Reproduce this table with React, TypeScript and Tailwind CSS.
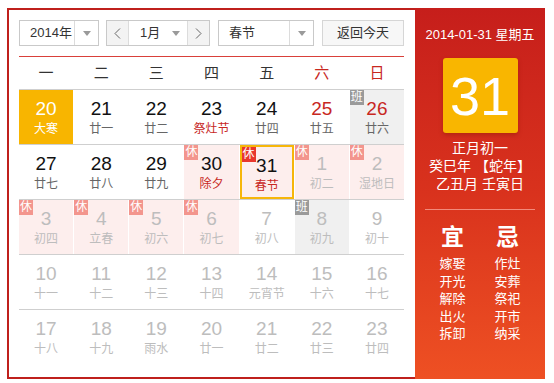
import React from 'react';

type Day = {
  d: number;
  lunar: string;
  other?: boolean;
  weekend?: boolean;
  fest?: boolean;
  tag?: '休' | '班';
  today?: boolean;
  selected?: boolean;
};

const rows: Day[][] = [
  [
    { d: 20, lunar: '大寒', today: true },
    { d: 21, lunar: '廿一' },
    { d: 22, lunar: '廿二' },
    { d: 23, lunar: '祭灶节', fest: true },
    { d: 24, lunar: '廿四' },
    { d: 25, lunar: '廿五', weekend: true },
    { d: 26, lunar: '廿六', weekend: true, tag: '班' },
  ],
  [
    { d: 27, lunar: '廿七' },
    { d: 28, lunar: '廿八' },
    { d: 29, lunar: '廿九' },
    { d: 30, lunar: '除夕', fest: true, tag: '休' },
    { d: 31, lunar: '春节', fest: true, tag: '休', selected: true },
    { d: 1, lunar: '初二', other: true, tag: '休' },
    { d: 2, lunar: '湿地日', other: true, tag: '休' },
  ],
  [
    { d: 3, lunar: '初四', other: true, tag: '休' },
    { d: 4, lunar: '立春', other: true, tag: '休' },
    { d: 5, lunar: '初六', other: true, tag: '休' },
    { d: 6, lunar: '初七', other: true, tag: '休' },
    { d: 7, lunar: '初八', other: true },
    { d: 8, lunar: '初九', other: true, tag: '班' },
    { d: 9, lunar: '初十', other: true },
  ],
  [
    { d: 10, lunar: '十一', other: true },
    { d: 11, lunar: '十二', other: true },
    { d: 12, lunar: '十三', other: true },
    { d: 13, lunar: '十四', other: true },
    { d: 14, lunar: '元宵节', other: true },
    { d: 15, lunar: '十六', other: true },
    { d: 16, lunar: '十七', other: true },
  ],
  [
    { d: 17, lunar: '十八', other: true },
    { d: 18, lunar: '十九', other: true },
    { d: 19, lunar: '雨水', other: true },
    { d: 20, lunar: '廿一', other: true },
    { d: 21, lunar: '廿二', other: true },
    { d: 22, lunar: '廿三', other: true },
    { d: 23, lunar: '廿四', other: true },
  ],
];

const weekdays = ['一', '二', '三', '四', '五', '六', '日'];
const yi = ['嫁娶', '开光', '解除', '出火', '拆卸'];
const ji = ['作灶', '安葬', '祭祀', '开市', '纳采'];

const Caret = () => (
  <svg width="8" height="5" viewBox="0 0 8 5">
    <path d="M0 0 L8 0 L4 5 Z" fill="#9a9a9a" />
  </svg>
);

const Chevron = ({ dir }: { dir: 'l' | 'r' }) => (
  <svg width="7" height="11" viewBox="0 0 7 11">
    <path
      d={dir === 'l' ? 'M6 0.5 L1 5.5 L6 10.5' : 'M1 0.5 L6 5.5 L1 10.5'}
      fill="none"
      stroke="#666"
      strokeWidth="1"
    />
  </svg>
);

const Cell = ({ day }: { day: Day }) => {
  let bg = 'bg-white';
  if (day.today) bg = 'bg-[#f8b500]';
  else if (day.tag === '休') bg = 'bg-[#fdeeed]';
  else if (day.tag === '班') bg = 'bg-[#f0f0f0]';

  let num = 'text-[#111]';
  let lun = 'text-[#666]';
  if (day.today) {
    num = 'text-white';
    lun = 'text-white';
  } else if (day.other) {
    num = 'text-[#bdbdbd]';
    lun = 'text-[#bdbdbd]';
  } else {
    if (day.weekend) num = 'text-[#c8281f]';
    if (day.fest) lun = 'text-[#c8281f]';
  }

  let tagBg = 'bg-[#f3958d]';
  if (day.tag === '班') tagBg = 'bg-[#9a9a9a]';
  if (day.selected) tagBg = 'bg-[#e8372d]';

  return (
    <div
      className={`relative h-[54px] flex flex-col items-center pt-[9px] ${bg} ${
        day.selected ? 'border-2 border-[#f6b60a] pt-[7px]' : ''
      }`}
    >
      {day.tag && (
        <span
          className={`absolute top-0 left-0 w-[14px] h-[15px] text-[12px] leading-[15px] text-white text-center ${tagBg}`}
        >
          {day.tag}
        </span>
      )}
      <span className={`text-[19px] leading-[20px] ${num}`}>{day.d}</span>
      <span className={`mt-[2px] text-[12px] leading-[16px] ${lun}`}>{day.lunar}</span>
    </div>
  );
};

export default function App() {
  return (
    <div
      className="w-[554px] h-[383px] bg-white pt-[8px] pl-[7px]"
      style={{ fontFamily: '"Liberation Sans", "Noto Sans CJK SC", sans-serif' }}
    >
      <div className="flex w-[538px] h-[371px]">
        <div className="w-[408px] border-2 border-r-0 border-[#bf201c] pl-[10px] pr-[11px] pt-[10px]">
          {/* toolbar */}
          <div className="flex h-[26px] text-[13px] text-[#333]">
            <div className="w-[80px] flex border border-[#c9c9c9] bg-white">
              <div className="flex-1 flex items-center pl-[10px]">2014年</div>
              <div className="w-[24px] border-l border-[#dcdcdc] flex items-center justify-center">
                <Caret />
              </div>
            </div>
            <div className="ml-[7px] w-[104px] flex border border-[#c9c9c9] bg-white">
              <div className="w-[22px] bg-[#f3f3f3] border-r border-[#dcdcdc] flex items-center justify-center">
                <Chevron dir="l" />
              </div>
              <div className="flex-1 flex items-center pl-[11px]">1月</div>
              <div className="w-[22px] flex items-center justify-center">
                <Caret />
              </div>
              <div className="w-[22px] bg-[#f3f3f3] border-l border-[#dcdcdc] flex items-center justify-center">
                <Chevron dir="r" />
              </div>
            </div>
            <div className="ml-[8px] w-[96px] flex border border-[#c9c9c9] bg-white">
              <div className="flex-1 flex items-center pl-[10px]">春节</div>
              <div className="w-[24px] border-l border-[#dcdcdc] flex items-center justify-center">
                <Caret />
              </div>
            </div>
            <div className="ml-[8px] w-[82px] flex items-center justify-center border border-[#d6d6d6] bg-[#f7f7f7]">
              返回今天
            </div>
          </div>

          <div className="mt-[10px] h-px bg-[#d9403a]" />

          {/* weekday header */}
          <div className="grid grid-cols-7 gap-x-px h-[33px] border-b border-[#cfcfcf] text-[15px]">
            {weekdays.map((w, i) => (
              <div
                key={w}
                className={`flex items-center justify-center ${i >= 5 ? 'text-[#c8281f]' : 'text-[#333]'}`}
              >
                {w}
              </div>
            ))}
          </div>

          {/* days */}
          {rows.map((row, ri) => (
            <div
              key={ri}
              className={`grid grid-cols-7 gap-x-px ${ri < rows.length - 1 ? 'border-b border-[#cfcfcf]' : ''}`}
            >
              {row.map((day, di) => (
                <Cell key={di} day={day} />
              ))}
            </div>
          ))}
        </div>

        {/* right panel */}
        <div className="w-[130px] flex flex-col items-center bg-gradient-to-b from-[#c61e1b] via-[#d9321d] to-[#ee5023] text-white pt-[18px]">
          <div className="text-[13px] leading-[18px]">2014-01-31 星期五</div>
          <div className="mt-[14px] w-[75px] h-[75px] rounded-[3px] bg-[#f9b600] shadow-[0_2px_4px_rgba(120,20,0,0.35)] flex items-center justify-center text-[54px] leading-none">
            31
          </div>
          <div className="mt-[6px] text-[14px] leading-[18px] text-center">
            <div>正月初一</div>
            <div>癸巳年 【蛇年】</div>
            <div>乙丑月 壬寅日</div>
          </div>
          <div className="mt-[16px] w-[110px] h-px bg-[#f28a7c]" />
          <div className="mt-[14px] flex w-[110px] justify-around text-[23px] leading-[26px] font-bold">
            <span>宜</span>
            <span>忌</span>
          </div>
          <div className="mt-[5px] flex w-[110px] justify-around text-[13px] leading-[17.5px]">
            <div className="flex flex-col">
              {yi.map(t => (
                <span key={t}>{t}</span>
              ))}
            </div>
            <div className="flex flex-col">
              {ji.map(t => (
                <span key={t}>{t}</span>
              ))}
            </div>
          </div>
        </div>
      </div>
    </div>
  );
}
